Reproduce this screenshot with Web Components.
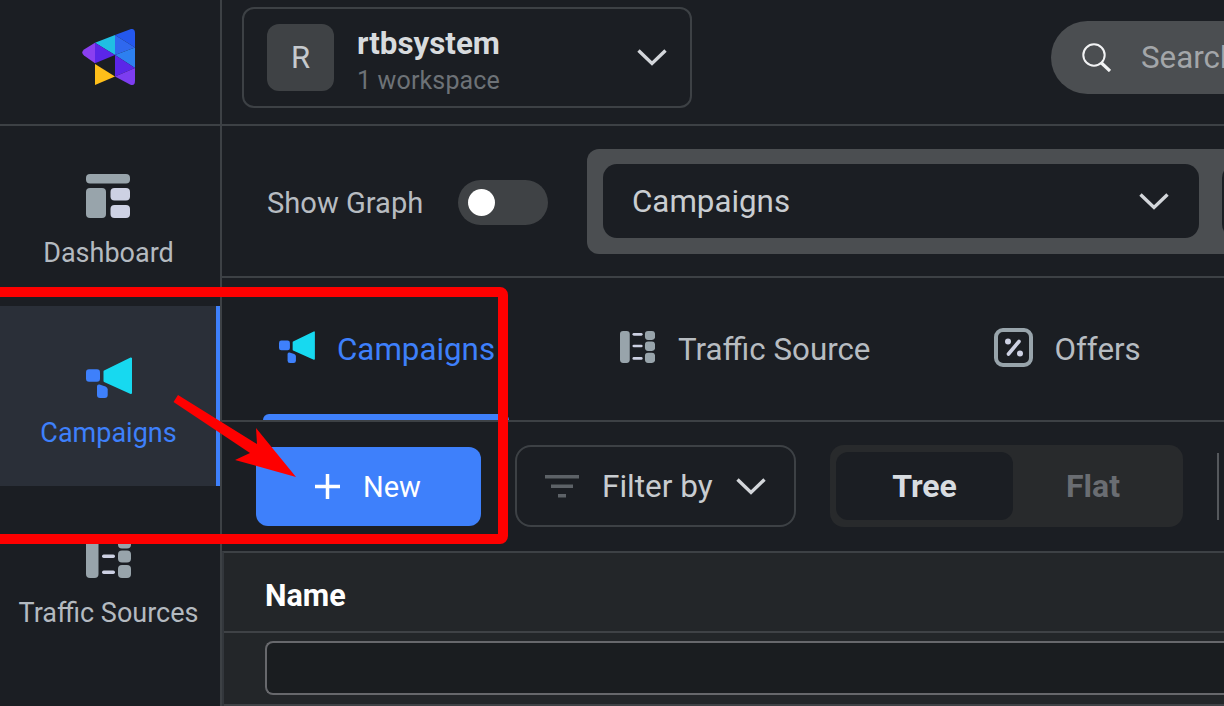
<!DOCTYPE html>
<html>
<head>
<meta charset="utf-8">
<title>Campaigns</title>
<style>
  html, body { margin: 0; height: 100%; background: #1b1e23; overflow: hidden; }
  body { font-family: Roboto, "Liberation Sans", sans-serif; }
</style>
</head>
<body>
<app-shell>
  <rail-nav slot="rail">
    <rail-item label="Dashboard" icon="dashboard"></rail-item>
    <rail-item label="Campaigns" icon="campaign" active></rail-item>
    <rail-item label="Traffic Sources" icon="traffic"></rail-item>
  </rail-nav>
  <top-bar></top-bar>
  <graph-bar></graph-bar>
  <tab-strip>
    <tab-item label="Campaigns" icon="campaign" active></tab-item>
    <tab-item label="Traffic Source" icon="traffic"></tab-item>
    <tab-item label="Offers" icon="offers"></tab-item>
  </tab-strip>
  <action-bar></action-bar>
  <name-table></name-table>
</app-shell>
<red-callout></red-callout>

<script>
const CHEVRON = `<svg width="30" height="17" viewBox="0 0 30 17" fill="none" stroke="#d3d6da" stroke-width="3.4"><path d="M1.5 1.5 15 14.5 28.500 1.500"/></svg>`;

const ICONS = {
  dashboard: `<svg width="44" height="44" viewBox="0 0 44 44">
    <rect x="0" y="0" width="44" height="9.5" rx="4" fill="#98a4ab"/>
    <rect x="0" y="14" width="20" height="30" rx="4" fill="#98a4ab"/>
    <rect x="24.500" y="14" width="19.500" height="12.500" rx="4" fill="#cdd1e3"/>
    <rect x="24.500" y="31" width="19.500" height="13" rx="4" fill="#cdd1e3"/>
  </svg>`,
  campaign: `<svg width="46" height="41" viewBox="0 0 46 41">
    <path d="M18.500 14.500 45 1.500V36L18.500 24Z" fill="#17d9f0" stroke="#17d9f0" stroke-width="2" stroke-linejoin="round"/>
    <rect x="0" y="12.300" width="14" height="12.400" rx="3" fill="#3e80fb"/>
    <path d="M13.500 27.500 19.500 29.500Q21.700 30.300 21.700 32.500V38Q21.700 41 18.700 41H14Q11 41 11 38V29.500Q11 27 13.500 27.500Z" fill="#3e80fb"/>
  </svg>`,
  traffic: `<svg width="45" height="41" viewBox="0 0 45 41">
    <rect x="0" y="0" width="12.500" height="41" rx="4" fill="#98a4ab"/>
    <rect x="16" y="2.500" width="13" height="3.500" rx="1.700" fill="#cdd1e3"/>
    <rect x="16" y="17.500" width="13" height="3.500" rx="1.700" fill="#cdd1e3"/>
    <rect x="16" y="33.500" width="13" height="3.500" rx="1.700" fill="#cdd1e3"/>
    <rect x="32" y="0" width="13" height="11.500" rx="4" fill="#98a4ab"/>
    <rect x="32" y="13.500" width="13" height="12" rx="4" fill="#98a4ab"/>
    <rect x="32" y="28" width="13" height="13" rx="4" fill="#98a4ab"/>
  </svg>`,
  offers: `<svg width="39" height="39" viewBox="0 0 39 39">
    <rect x="2" y="2" width="35" height="35" rx="7" fill="none" stroke="#98a4ab" stroke-width="4"/>
    <circle cx="14" cy="13.500" r="3" fill="#cdd1e3"/>
    <circle cx="26" cy="25.500" r="3" fill="#cdd1e3"/>
    <path d="M14.500 26 25 13.500" stroke="#cdd1e3" stroke-width="3.600" stroke-linecap="round"/>
  </svg>`,
};

class AppShell extends HTMLElement {
  connectedCallback() {
    this.attachShadow({ mode: 'open' });
    this.shadowRoot.innerHTML = `
      <style>
        :host { display: flex; width: 1224px; height: 706px; overflow: hidden; background: #1b1e23; }
        .main { flex: 1; min-width: 0; display: flex; flex-direction: column; overflow: hidden; }
      </style>
      <slot name="rail"></slot>
      <div class="main"><slot></slot></div>
    `;
  }
}

class RailNav extends HTMLElement {
  connectedCallback() {
    this.attachShadow({ mode: 'open' });
    this.shadowRoot.innerHTML = `
      <style>
        :host { display: block; flex: none; width: 220px; border-right: 2px solid #3d4145; }
        .logo { height: 124px; border-bottom: 2px solid #3d4145; display: flex; align-items: flex-start; justify-content: center; margin-right: -2px; }
        svg { margin-top: 29px; margin-left: -4px; }
      </style>
      <div class="logo">
        <svg width="54" height="57" viewBox="82 29 54 57">
          <path d="M95 42.700V63.300L84 55.500Q80.500 52.500 84 49.500Z" fill="#8a3ff0"/>
          <path d="M95 42.700 115 35V55Z" fill="#20bfe3"/>
          <path d="M95 42.700 115 55 95 63.300Z" fill="#5b26e8"/>
          <path d="M95 64 115 76.500 95 85Z" fill="#ffbf1a"/>
          <path d="M115 35 131 29Q135 28.500 135 33V47.500Z" fill="#2458ee"/>
          <path d="M115 35 135 47.500 115 55Z" fill="#2f68ee"/>
          <path d="M115 55 135 47.500V68Z" fill="#2d80f0"/>
          <path d="M115 55 135 68 115 76.500Z" fill="#5b26e8"/>
          <path d="M115 76.500 135 68V81Q135 86.500 130 84.500Z" fill="#7d3df0"/>
        </svg>
      </div>
      <slot></slot>
    `;
  }
}

class RailItem extends HTMLElement {
  connectedCallback() {
    const active = this.hasAttribute('active');
    const icon = this.getAttribute('icon');
    this.attachShadow({ mode: 'open' });
    this.shadowRoot.innerHTML = `
      <style>
        :host {
          display: flex;
          flex-direction: column;
          align-items: center;
          box-sizing: border-box;
          height: 180px;
          padding-top: 48px;
          color: ${active ? '#3e80fb' : '#b4bac0'};
          background: ${active ? '#2a2f38' : 'transparent'};
          border-right: 4px solid ${active ? '#3e80fb' : 'transparent'};
          font-size: 27px;
        }
        .icon { height: 44px; display: flex; align-items: ${icon === 'dashboard' ? 'flex-start' : 'flex-end'}; margin-left: ${icon === 'campaign' ? 2 : icon === 'traffic' ? 1 : 0}px; }
        .label { margin-top: 19px; padding-left: 1px; line-height: 32px; white-space: nowrap; }
      </style>
      <div class="icon">${ICONS[icon]}</div>
      <div class="label">${this.getAttribute('label')}</div>
    `;
  }
}

class TopBar extends HTMLElement {
  connectedCallback() {
    this.attachShadow({ mode: 'open' });
    this.shadowRoot.innerHTML = `
      <style>
        :host { display: flex; flex: none; align-items: center; box-sizing: border-box; height: 126px; padding: 0 0 9px 20px; border-bottom: 2px solid #3d4145; width: 1002px; }
        .workspace { flex: none; box-sizing: border-box; width: 450px; height: 101px; border: 2px solid #3d4145; border-radius: 12px; display: flex; align-items: center; padding: 0 23px; }
        .tile { width: 67px; height: 67px; border-radius: 12px; background: #3f4245; color: #c6cace; font-size: 31px; display: grid; place-items: center; flex: none; }
        .names { margin-left: 23px; flex: 1; padding-top: 11px; }
        .name { font-size: 31.300px; font-weight: 700; line-height: 36px; color: #d8dbde; margin-top: -4px; }
        .sub { font-size: 25px; line-height: 30px; color: #6d7277; margin-top: 4px; letter-spacing: .15px; }
        .search { margin-left: 359px; flex: none; width: 400px; height: 73px; border-radius: 37px; background: #4b4e51; display: flex; align-items: center; padding-left: 31px; box-sizing: border-box; color: #a3a6a9; font-size: 31.300px; }
        .search svg { margin-right: 30px; flex: none; }
        .workspace svg { flex: none; }
      </style>
      <div class="workspace">
        <div class="tile">R</div>
        <div class="names">
          <div class="name">rtbsystem</div>
          <div class="sub">1 workspace</div>
        </div>
        ${CHEVRON}
      </div>
      <div class="search">
        <svg width="29" height="29" viewBox="0 0 29 29" fill="none" stroke="#f2f3f4"><circle cx="12" cy="12" r="10.700" stroke-width="2"/><path d="M19.500 20 28 28" stroke-width="3.200"/></svg>
        <span>Search</span>
      </div>
    `;
  }
}

class GraphBar extends HTMLElement {
  connectedCallback() {
    this.attachShadow({ mode: 'open' });
    this.shadowRoot.innerHTML = `
      <style>
        :host { display: flex; flex: none; align-items: center; box-sizing: border-box; width: 1002px; height: 152px; border-bottom: 2px solid #3d4145; padding: 2px 0 0 45px; }
        .label { font-size: 29.100px; color: #b7bcc1; white-space: nowrap; width: 157px; flex: none; padding-top: 2px; }
        .toggle { flex: none; box-sizing: border-box; width: 90px; height: 45px; border-radius: 23px; background: #3f4245; margin-left: 34px; padding: 9px 10px; }
        .toggle i { display: block; width: 27px; height: 27px; border-radius: 50%; background: #fff; }
        .panel { flex: none; margin-left: 39px; width: 700px; height: 105px; border-radius: 12px 0 0 12px; background: #4b4e51; padding: 15px 0 0 16px; box-sizing: border-box; display: flex; gap: 23px; align-self: flex-start; margin-top: 21px; }
        .select { flex: none; box-sizing: border-box; width: 596px; height: 74px; background: #1b1e23; border-radius: 14px; display: flex; align-items: center; justify-content: space-between; padding: 0 30px 0 29px; color: #c9cdd1; font-size: 31.300px; }
        .select.next { width: 80px; padding: 0; border-radius: 14px 0 0 14px; }
      </style>
      <div class="label">Show Graph</div>
      <div class="toggle"><i></i></div>
      <div class="panel">
        <div class="select"><span>Campaigns</span>${CHEVRON}</div>
        <div class="select next"></div>
      </div>
    `;
  }
}

class TabStrip extends HTMLElement {
  connectedCallback() {
    this.attachShadow({ mode: 'open' });
    this.shadowRoot.innerHTML = `
      <style>
        :host { display: flex; flex: none; box-sizing: border-box; width: 1002px; height: 144px; padding-left: 41px; border-bottom: 2px solid #3d4145; gap: 95px; }
      </style>
      <slot></slot>
    `;
  }
}

class TabItem extends HTMLElement {
  connectedCallback() {
    const active = this.hasAttribute('active');
    const icon = this.getAttribute('icon');
    const boxWidth = { campaign: 36, traffic: 36, offers: 39 }[icon];
    this.attachShadow({ mode: 'open' });
    this.shadowRoot.innerHTML = `
      <style>
        :host { display: flex; align-items: flex-start; box-sizing: border-box; height: 143px; position: relative; padding: 0 14px 0 16px; margin-left: ${icon === 'offers' ? -1 : 0}px; font-size: 31.300px; color: ${active ? '#3e80fb' : '#b7bcc1'}; }
        .icon { width: ${boxWidth}px; height: 142px; display: flex; align-items: center; margin-top: -2px; flex: none; }
        .label { line-height: 144px; margin-left: ${icon === 'offers' ? 21 : 22}px; white-space: nowrap; }
        .icon svg { zoom: .78; }
        .icon.offers svg { zoom: 1; }
        .bar { position: absolute; left: 0; right: 0; bottom: 1px; height: 6px; background: #3e80fb; border-radius: 6px 6px 0 0; }
      </style>
      <div class="icon ${icon}">${ICONS[icon]}</div>
      <div class="label">${this.getAttribute('label')}</div>
      ${active ? '<div class="bar"></div>' : ''}
    `;
  }
}

class ActionBar extends HTMLElement {
  connectedCallback() {
    this.attachShadow({ mode: 'open' });
    this.shadowRoot.innerHTML = `
      <style>
        :host { display: flex; flex: none; box-sizing: border-box; width: 1002px; height: 129px; padding: 23px 0 0 34px; align-items: flex-start; }
        .new { flex: none; margin-top: 2px; box-sizing: border-box; width: 225px; height: 79px; border-radius: 12px; background: #3e80fb; color: #fff; font-size: 29px; display: flex; align-items: center; padding-left: 59px; gap: 23px; }
        .filter { flex: none; margin-left: 34px; box-sizing: border-box; width: 281px; height: 82px; border: 2px solid #3d4145; border-radius: 16px; display: flex; align-items: center; padding-left: 28px; color: #c8ccd0; font-size: 31.500px; }
        .filter span { margin: 0 23px 0 23px; }
        .seg { flex: none; margin-left: 34px; box-sizing: border-box; width: 353px; height: 82px; background: #282a2c; border-radius: 14px; padding: 7px 6px; display: flex; font-size: 32px; font-weight: 700; }
        .seg div { display: grid; place-items: center; }
        .tree { width: 177px; background: #1b1e23; border-radius: 12px; color: #d8dce0; }
        .flat { flex: 1; color: #6a6d72; padding-right: 4px; }
        .rule { flex: none; width: 2px; height: 67px; background: #55585c; margin: 8px 0 0 34px; }
      </style>
      <div class="new">
        <svg width="25" height="25" viewBox="0 0 25 25" stroke="#fff" stroke-width="3.500"><path d="M12.500 0V25M0 12.500H25"/></svg>
        <span>New</span>
      </div>
      <div class="filter">
        <svg width="34" height="23" viewBox="0 0 34 23" fill="#5d6267"><rect width="34" height="3.500"/><rect x="6" y="9.500" width="22" height="3.500"/><rect x="13" y="19" width="8" height="3.500"/></svg>
        <span>Filter by</span>
        ${CHEVRON}
      </div>
      <div class="seg"><div class="tree">Tree</div><div class="flat">Flat</div></div>
      <div class="rule"></div>
    `;
  }
}

class NameTable extends HTMLElement {
  connectedCallback() {
    this.attachShadow({ mode: 'open' });
    this.shadowRoot.innerHTML = `
      <style>
        :host { display: block; flex: none; box-sizing: border-box; width: 1002px; background: #232629; border-top: 2px solid #3d4145; border-left: 2px solid #33373c; }
        .head { height: 78px; line-height: 86px; padding-left: 41px; font-size: 30.500px; font-weight: 700; color: #fff; border-bottom: 2px solid #3f4246; }
        .filter-row { height: 73px; padding: 8px 0 0 41px; box-sizing: border-box; border-bottom: 2px solid #3f4246; }
        .input { box-sizing: border-box; width: 1000px; height: 54px; background: #1a1d20; border: 2px solid #67686c; border-right: 0; border-radius: 8px 0 0 8px; }
      </style>
      <div class="head">Name</div>
      <div class="filter-row"><div class="input"></div></div>
    `;
  }
}

class RedCallout extends HTMLElement {
  connectedCallback() {
    this.attachShadow({ mode: 'open' });
    this.shadowRoot.innerHTML = `
      <style>
        :host { position: absolute; left: 0; top: 0; width: 1224px; height: 706px; pointer-events: none; }
        .box { position: absolute; left: -20px; top: 287px; width: 528px; height: 257px; box-sizing: border-box; border: 10px solid #fe0000; border-radius: 8px; }
        svg { position: absolute; left: 0; top: 0; }
      </style>
      <div class="box"></div>
      <svg width="1224" height="706" viewBox="0 0 1224 706">
        <path d="M173.500 402 178 395 257 444 256 428 296 477 235 460 250 453Z" fill="#fe0000"/>
      </svg>
    `;
  }
}

customElements.define('app-shell', AppShell);
customElements.define('rail-nav', RailNav);
customElements.define('rail-item', RailItem);
customElements.define('top-bar', TopBar);
customElements.define('graph-bar', GraphBar);
customElements.define('tab-strip', TabStrip);
customElements.define('tab-item', TabItem);
customElements.define('action-bar', ActionBar);
customElements.define('name-table', NameTable);
customElements.define('red-callout', RedCallout);
</script>
</body>
</html>
